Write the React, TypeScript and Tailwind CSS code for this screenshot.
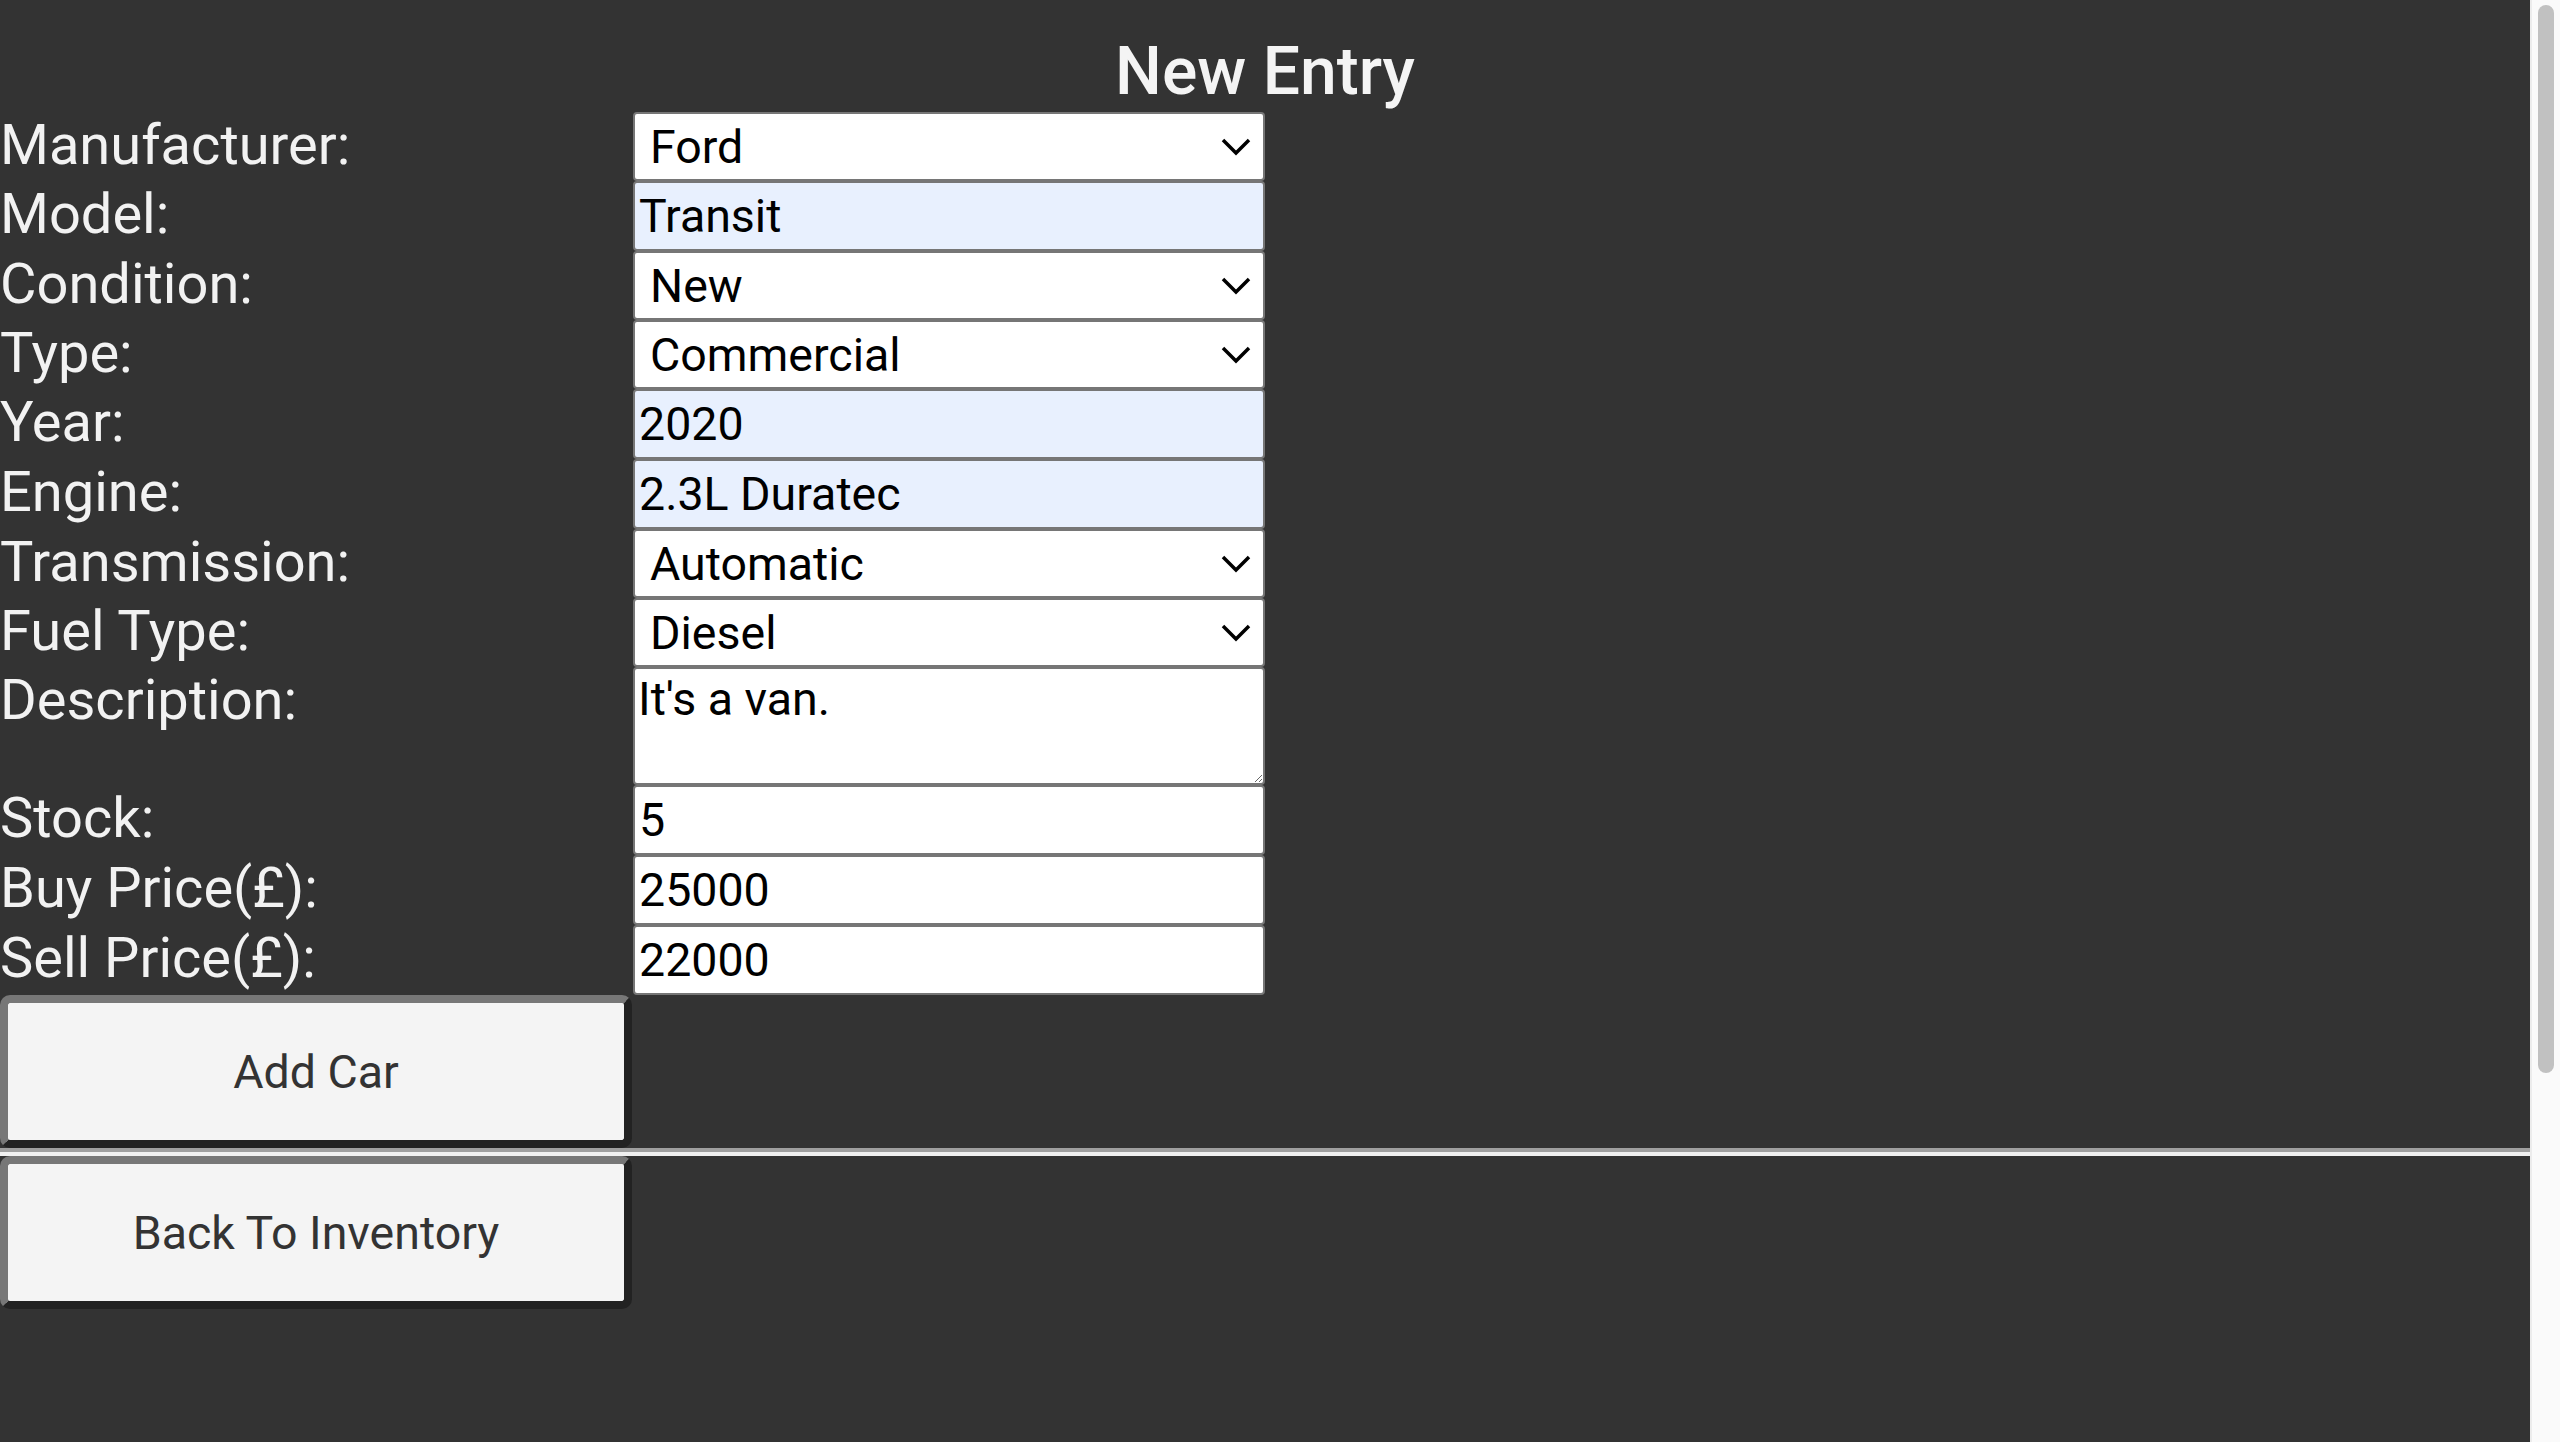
import React from 'react';

type Field =
  | { label: string; kind: 'select'; value: string; options: string[] }
  | { label: string; kind: 'input'; value: string; autofill?: boolean }
  | { label: string; kind: 'textarea'; value: string };

const fields: Field[] = [
  { label: 'Manufacturer:', kind: 'select', value: 'Ford', options: ['Ford', 'Vauxhall', 'Toyota'] },
  { label: 'Model:', kind: 'input', value: 'Transit', autofill: true },
  { label: 'Condition:', kind: 'select', value: 'New', options: ['New', 'Used'] },
  { label: 'Type:', kind: 'select', value: 'Commercial', options: ['Commercial', 'Saloon', 'Hatchback'] },
  { label: 'Year:', kind: 'input', value: '2020', autofill: true },
  { label: 'Engine:', kind: 'input', value: '2.3L Duratec', autofill: true },
  { label: 'Transmission:', kind: 'select', value: 'Automatic', options: ['Automatic', 'Manual'] },
  { label: 'Fuel Type:', kind: 'select', value: 'Diesel', options: ['Diesel', 'Petrol', 'Electric'] },
  { label: 'Description:', kind: 'textarea', value: "It's a van." },
  { label: 'Stock:', kind: 'input', value: '5' },
  { label: 'Buy Price(£):', kind: 'input', value: '25000' },
  { label: 'Sell Price(£):', kind: 'input', value: '22000' },
];

function Chevron() {
  return (
    <svg
      className="pointer-events-none absolute right-[14px] top-1/2 -translate-y-1/2"
      width="30"
      height="18"
      viewBox="0 0 30 18"
      fill="none"
    >
      <polyline points="2,2 15,15 28,2" stroke="#000" strokeWidth="3.5" />
    </svg>
  );
}

function FieldControl({ field }: { field: Field }) {
  const base = 'w-full border-2 border-[#767676] rounded-[4px] text-[46.5px] leading-[normal] text-black outline-none';

  if (field.kind === 'select') {
    return (
      <div className="relative">
        <select defaultValue={field.value} className={`${base} h-[69px] appearance-none bg-white pl-[15px] pr-[50px]`}>
          {field.options.map(o => (
            <option key={o}>{o}</option>
          ))}
        </select>
        <Chevron />
      </div>
    );
  }

  if (field.kind === 'textarea') {
    return <textarea defaultValue={field.value} className={`${base} block h-[118px] bg-white p-[3px]`} />;
  }

  return (
    <input
      type="text"
      defaultValue={field.value}
      className={`${base} h-[70px] px-[4px] ${field.autofill ? 'bg-[#e8f0fe]' : 'bg-white'}`}
    />
  );
}

function BevelButton({ children }: { children: React.ReactNode }) {
  return (
    <button className="block h-[153px] w-[632px] rounded-[10px] border-[8px] border-t-[#777777] border-l-[#777777] border-b-[#222222] border-r-[#222222] bg-[#f4f4f4] text-[46.5px] leading-[normal] text-[#333333]">
      {children}
    </button>
  );
}

export default function App() {
  return (
    <div className="flex h-screen overflow-hidden bg-[#333333] font-[Roboto,sans-serif]">
      <main className="min-w-0 flex-1">
        <h1 className="mt-[32px] text-center text-[66px] font-medium leading-[80px] text-[#f4f4f4]">New Entry</h1>

        <form className="grid grid-cols-[633px_632px] items-start">
          {fields.map(f => (
            <React.Fragment key={f.label}>
              <label className="text-[56px] leading-[66px] text-[#f2f2f2]">{f.label}</label>
              <FieldControl field={f} />
            </React.Fragment>
          ))}
        </form>

        <BevelButton>Add Car</BevelButton>
        <hr className="h-0 border-0 border-t-[4px] border-b-[4px] border-t-[#9f9f9f] border-b-[#f0f0f0]" />
        <BevelButton>Back To Inventory</BevelButton>
      </main>

      {/* page scrollbar */}
      <div className="w-[30px] shrink-0 border-l-2 border-[#ececec] bg-[#fafafa] pl-[6px] pt-[5px]">
        <div className="h-[1068px] w-[16px] rounded-full bg-[#c1c1c1]" />
      </div>
    </div>
  );
}
